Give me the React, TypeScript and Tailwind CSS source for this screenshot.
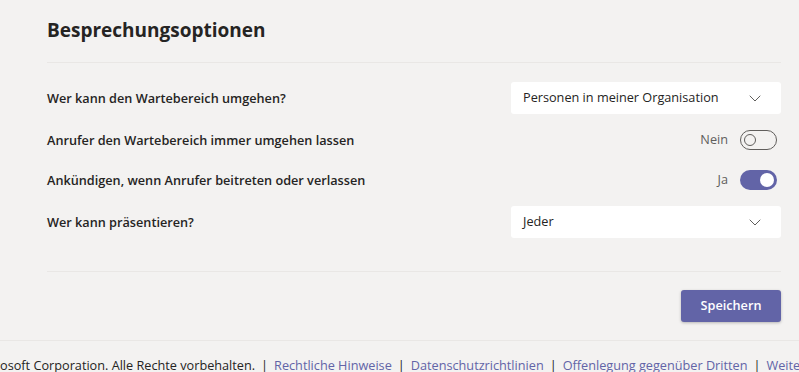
import React, { useState } from "react";

const font = { fontFamily: '"Segoe UI", "Open Sans", "Noto Sans", sans-serif' };

const Chevron = () => (
  <svg width="12" height="7" viewBox="0 0 12 7" fill="none">
    <path d="M1 1l5 5 5-5" stroke="#605e5c" strokeWidth="1" strokeLinecap="round" strokeLinejoin="round" />
  </svg>
);

const Dropdown = ({ value }: { value: string }) => (
  <button className="flex h-[32px] w-[270px] items-center justify-between rounded-[3px] bg-white pl-[12px] pr-[20px] text-[12.7px] text-[#252423]">
    <span>{value}</span>
    <Chevron />
  </button>
);

const Toggle = ({ on, onClick }: { on: boolean; onClick: () => void }) => (
  <button
    onClick={onClick}
    className={
      on
        ? "flex h-[20px] w-[37px] items-center justify-end rounded-full bg-[#6264a7] px-[3px]"
        : "flex h-[20px] w-[37px] items-center justify-start rounded-full border border-[#605e5c] px-[3px]"
    }
  >
    {on ? (
      <span className="h-[14px] w-[14px] rounded-full bg-white" />
    ) : (
      <span className="h-[12px] w-[12px] rounded-full border border-[#605e5c]" />
    )}
  </button>
);

const App = () => {
  const [bypass, setBypass] = useState(false);
  const [announce, setAnnounce] = useState(true);

  return (
    <div className="flex min-h-[372px] flex-col overflow-hidden bg-[#f3f2f1] text-[#252423]" style={font}>
      <div className="pl-[47px] pr-[18px]">
        <h1 className="border-b border-[#e9e7e5] pb-[18px] pt-[17px] text-[19px] font-bold leading-[27px]">
          Besprechungsoptionen
        </h1>

        <div className="pt-[19px]">
          <div className="flex h-[32px] items-center justify-between">
            <span className="pt-[1px] text-[12.7px] font-semibold">Wer kann den Wartebereich umgehen?</span>
            <Dropdown value="Personen in meiner Organisation" />
          </div>
          <div className="mt-[6px] flex h-[40px] items-center justify-between">
            <span className="pt-[1px] text-[12.7px] font-semibold">Anrufer den Wartebereich immer umgehen lassen</span>
            <div className="flex items-center gap-[12px] pr-[4px]">
              <span className="text-[12.7px] text-[#605e5c]">{bypass ? "Ja" : "Nein"}</span>
              <Toggle on={bypass} onClick={() => setBypass(!bypass)} />
            </div>
          </div>
          <div className="flex h-[40px] items-center justify-between">
            <span className="pt-[1px] text-[12.7px] font-semibold">Ankündigen, wenn Anrufer beitreten oder verlassen</span>
            <div className="flex items-center gap-[12px] pr-[4px]">
              <span className="text-[12.7px] text-[#605e5c]">{announce ? "Ja" : "Nein"}</span>
              <Toggle on={announce} onClick={() => setAnnounce(!announce)} />
            </div>
          </div>
          <div className="mt-[6px] flex h-[32px] items-center justify-between">
            <span className="pt-[1px] text-[12.7px] font-semibold">Wer kann präsentieren?</span>
            <Dropdown value="Jeder" />
          </div>
        </div>

        <div className="mt-[33px] border-t border-[#e9e7e5] pb-[18px] pt-[18px]">
          <div className="flex justify-end">
            <button className="h-[32px] w-[100px] rounded-[3px] bg-[#6264a7] text-[12.7px] font-semibold text-white shadow-[0_1px_3px_rgba(0,0,0,0.25)]">
              Speichern
            </button>
          </div>
        </div>
      </div>

      <footer className="flex justify-start overflow-hidden whitespace-nowrap border-t border-[#e9e7e5] pt-[15px] text-[12.7px] text-[#252423]">
        <span className="-ml-[72px] shrink-0">© 2020 Microsoft Corporation. Alle Rechte vorbehalten.</span>
        <span className="shrink-0 px-[6px]">|</span>
        <a className="shrink-0 text-[#6264a7]">Rechtliche Hinweise</a>
        <span className="shrink-0 px-[6px]">|</span>
        <a className="shrink-0 text-[#6264a7]">Datenschutzrichtlinien</a>
        <span className="shrink-0 px-[6px]">|</span>
        <a className="shrink-0 text-[#6264a7]">Offenlegung gegenüber Dritten</a>
        <span className="shrink-0 px-[6px]">|</span>
        <a className="shrink-0 text-[#6264a7]">Weitere Informationen</a>
      </footer>
    </div>
  );
};

export default App;
